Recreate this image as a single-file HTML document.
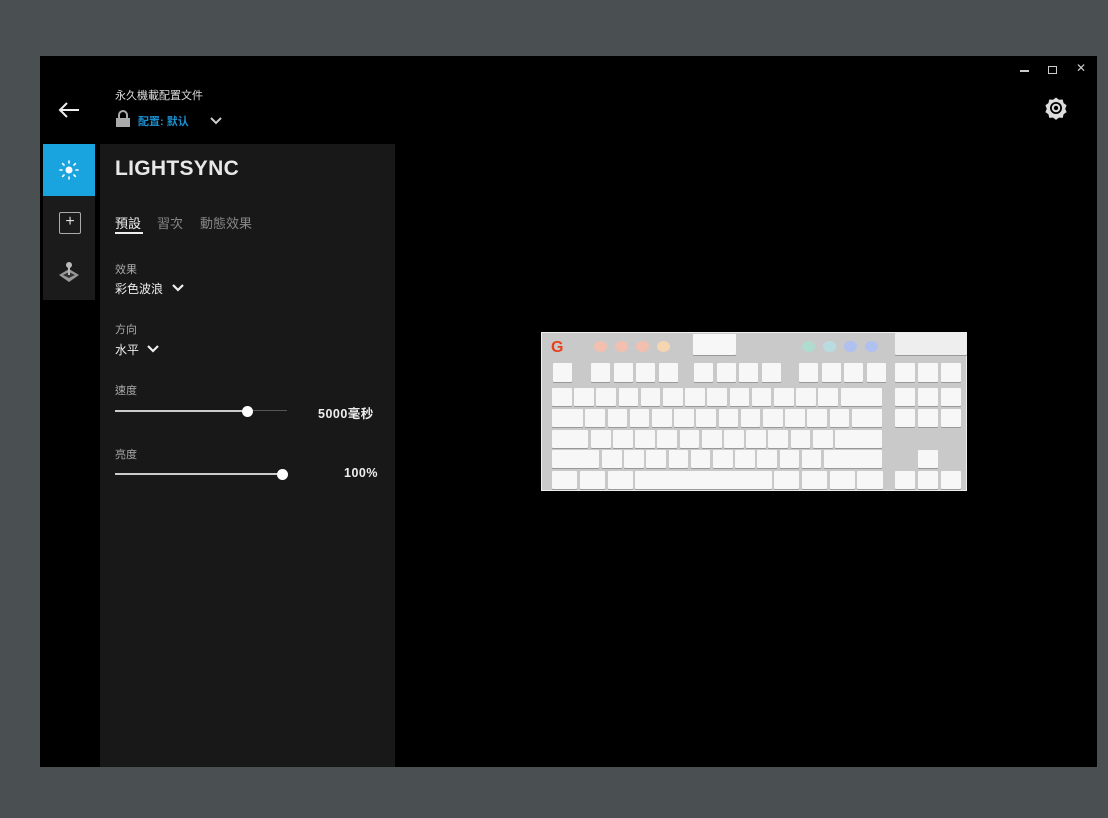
<!DOCTYPE html>
<html><head><meta charset="utf-8"><style>
*{margin:0;padding:0;box-sizing:border-box}
body{width:1108px;height:818px;background:#4a4f51;position:relative;overflow:hidden;font-family:"Liberation Sans","Noto Sans CJK TC",sans-serif;color:#ddd}
.win{position:absolute;left:40px;top:56px;width:1057px;height:711px;background:#000}
.abs{position:absolute}
.panel{left:60px;top:88px;width:295px;height:623px;background:#181818}
.side{left:3px;top:88px;width:52px;height:156px;background:#1b1b1b}
.lbl{font-size:11px;color:#aaa}
.val{font-size:12px;color:#eee}
.kb{left:501px;top:276px;width:426px;height:159px;background:#c9c9c9;border:1px solid #eee}
.k{position:absolute;background:#f7f7f7;border-radius:1px;box-shadow:0 1px 0 #999}
.c{position:absolute;width:13px;height:11px;border-radius:50%;background:#fff}
</style></head><body>
<div class="win">
 <div class="abs" style="left:980px;top:14px;width:9px;height:2px;background:#ccc"></div>
 <div class="abs" style="left:1008px;top:10px;width:9px;height:8px;border:1.5px solid #ccc"></div>
 <div class="abs" style="left:1036px;top:5px;font-size:12px;color:#ccc">✕</div>
 <svg class="abs" style="left:1004px;top:40px" width="24" height="24" viewBox="0 0 24 24"><path d="M12 1.5l3 2.3 3.7-.3.9 3.6 3 2.2-1.4 3.4 1.4 3.4-3 2.2-.9 3.6-3.7-.3-3 2.3-3-2.3-3.7.3-.9-3.6-3-2.2 1.4-3.4-1.4-3.4 3-2.2.9-3.6 3.7.3z" fill="#ddd"/><circle cx="12" cy="12" r="6" fill="#000"/><circle cx="12" cy="12" r="4.2" fill="#ddd"/><circle cx="12" cy="12" r="2.2" fill="#000"/></svg>
 <svg class="abs" style="left:17px;top:45px" width="24" height="18" viewBox="0 0 24 18"><path d="M22 9H3M10 2L3 9l7 7" stroke="#eee" stroke-width="2" fill="none"/></svg>
 <div class="abs" style="left:75px;top:31px;font-size:11px;color:#ddd">永久機載配置文件</div>
 <svg class="abs" style="left:75px;top:54px" width="16" height="18" viewBox="0 0 16 18"><path d="M4 8V5a4 4 0 0 1 8 0v3" stroke="#aaa" stroke-width="2" fill="none"/><rect x="1" y="8" width="14" height="9" fill="#aaa"/></svg>
 <div class="abs" style="left:98px;top:57px;font-size:11px;color:#1a8fd0;font-weight:bold">配置: 默认</div>
 <svg class="abs" style="left:170px;top:61px" width="12" height="8"><path d="M1 1l5 5 5-5" stroke="#ccc" stroke-width="2" fill="none"/></svg>
 <div class="abs side"></div>
 <div class="abs" style="left:3px;top:88px;width:52px;height:52px;background:#19a4e0"></div>
 <svg class="abs" style="left:17px;top:102px" width="24" height="24" viewBox="0 0 24 24"><g stroke="#fff" stroke-width="1.6" stroke-linecap="round"><path d="M12 3v2M12 19v2M3 12h2M19 12h2M5.6 5.6l1.4 1.4M17 17l1.4 1.4M5.6 18.4L7 17M17 7l1.4-1.4"/></g><circle cx="12" cy="12" r="3.5" fill="#fff"/></svg>
 <div class="abs" style="left:19px;top:156px;width:22px;height:22px;border:1.5px solid #aaa;border-radius:2px;color:#ddd;font-size:16px;line-height:18px;text-align:center">+</div>
 <svg class="abs" style="left:17px;top:204px" width="24" height="24" viewBox="0 0 24 24"><path d="M2 15l10-6 10 6-10 7z" fill="#999"/><path d="M6 15l6-3 6 3-6 3z" fill="#333"/><rect x="11" y="6" width="2" height="9" fill="#bbb"/><circle cx="12" cy="5" r="3" fill="#bbb"/></svg>
 <div class="abs panel"></div>
 <div class="abs" style="left:75px;top:101px;font-size:21px;color:#e8e8e8;letter-spacing:0.3px;font-weight:bold">LIGHTSYNC</div>
 <div class="abs" style="left:75px;top:157px;font-size:13px;color:#eee">預設</div>
 <div class="abs" style="left:75px;top:176px;width:28px;height:2px;background:#eee"></div>
 <div class="abs" style="left:117px;top:157px;font-size:13px;color:#888">習次</div>
 <div class="abs" style="left:160px;top:157px;font-size:13px;color:#888">動態效果</div>
 <div class="abs lbl" style="left:75px;top:205px">效果</div>
 <div class="abs val" style="left:75px;top:224px">彩色波浪</div>
 <svg class="abs" style="left:132px;top:228px" width="12" height="8"><path d="M1 1l5 5 5-5" stroke="#eee" stroke-width="2.2" fill="none"/></svg>
 <div class="abs lbl" style="left:75px;top:265px">方向</div>
 <div class="abs val" style="left:75px;top:285px">水平</div>
 <svg class="abs" style="left:107px;top:289px" width="12" height="8"><path d="M1 1l5 5 5-5" stroke="#eee" stroke-width="2.2" fill="none"/></svg>
 <div class="abs lbl" style="left:75px;top:326px">速度</div>
 <div class="abs" style="left:75px;top:354px;width:132px;height:2px;background:#ccc"></div>
 <div class="abs" style="left:207px;top:354px;width:40px;height:1px;background:#555"></div>
 <div class="abs" style="left:202px;top:350px;width:11px;height:11px;border-radius:50%;background:#fff"></div>
 <div class="abs" style="left:278px;top:347px;font-size:12.5px;color:#eee;font-weight:bold;letter-spacing:0.5px">5000毫秒</div>
 <div class="abs lbl" style="left:75px;top:390px">亮度</div>
 <div class="abs" style="left:75px;top:417px;width:167px;height:2px;background:#ccc"></div>
 <div class="abs" style="left:237px;top:413px;width:11px;height:11px;border-radius:50%;background:#fff"></div>
 <div class="abs" style="left:304px;top:410px;font-size:12.5px;color:#eee;font-weight:bold;letter-spacing:0.5px">100%</div>
 <div class="abs kb" id="kb">
  <div class="abs" style="left:9px;top:6px;font-size:16px;font-weight:bold;color:#e8401c">G</div>
  <div class="c" style="left:52px;top:8px;background:#f3c0b0"></div><div class="c" style="left:73px;top:8px;background:#f3c0b0"></div><div class="c" style="left:94px;top:8px;background:#f3c0b0"></div><div class="c" style="left:115px;top:8px;background:#f5d6b0"></div>
  <div class="c" style="left:260px;top:8px;background:#b0dcd0"></div><div class="c" style="left:281px;top:8px;background:#b8dce0"></div><div class="c" style="left:302px;top:8px;background:#b0c0f0"></div><div class="c" style="left:323px;top:8px;background:#b0c0f0"></div>
  <div class="k" style="left:151px;top:1px;width:43px;height:21px"></div>
  <div class="k" style="left:353px;top:0px;width:72px;height:22px;background:#eee"></div>
 </div>
</div>
<script>
var kb=document.getElementById('kb');
function k(x,y,w,h){var d=document.createElement('div');d.className='k';d.style.cssText='left:'+x+'px;top:'+y+'px;width:'+w+'px;height:'+h+'px';kb.appendChild(d);}
k(11,30,19,19);
[49,152,257].forEach(function(s){for(var i=0;i<4;i++)k(s+i*22.5,30,19,19);});
for(var i=0;i<3;i++)k(353+i*23,30,20,19);
var u=22.2,rows=[[1,1,1,1,1,1,1,1,1,1,1,1,1,2],[1.5,1,1,1,1,1,1,1,1,1,1,1,1,1.5],[1.75,1,1,1,1,1,1,1,1,1,1,1,2.25],[2.25,1,1,1,1,1,1,1,1,1,1,2.75],[1.25,1.25,1.25,6.25,1.25,1.25,1.25,1.25]];
var ys=[55,76,97,117,138];
rows.forEach(function(r,j){var x=10;r.forEach(function(w){k(x,ys[j],w*u-2.5,18);x+=w*u;});});
[55,76].forEach(function(y){for(var i=0;i<3;i++)k(353+i*23,y,20,18);});
k(376,117,20,18);for(var i=0;i<3;i++)k(353+i*23,138,20,18);
</script>
</body></html>
